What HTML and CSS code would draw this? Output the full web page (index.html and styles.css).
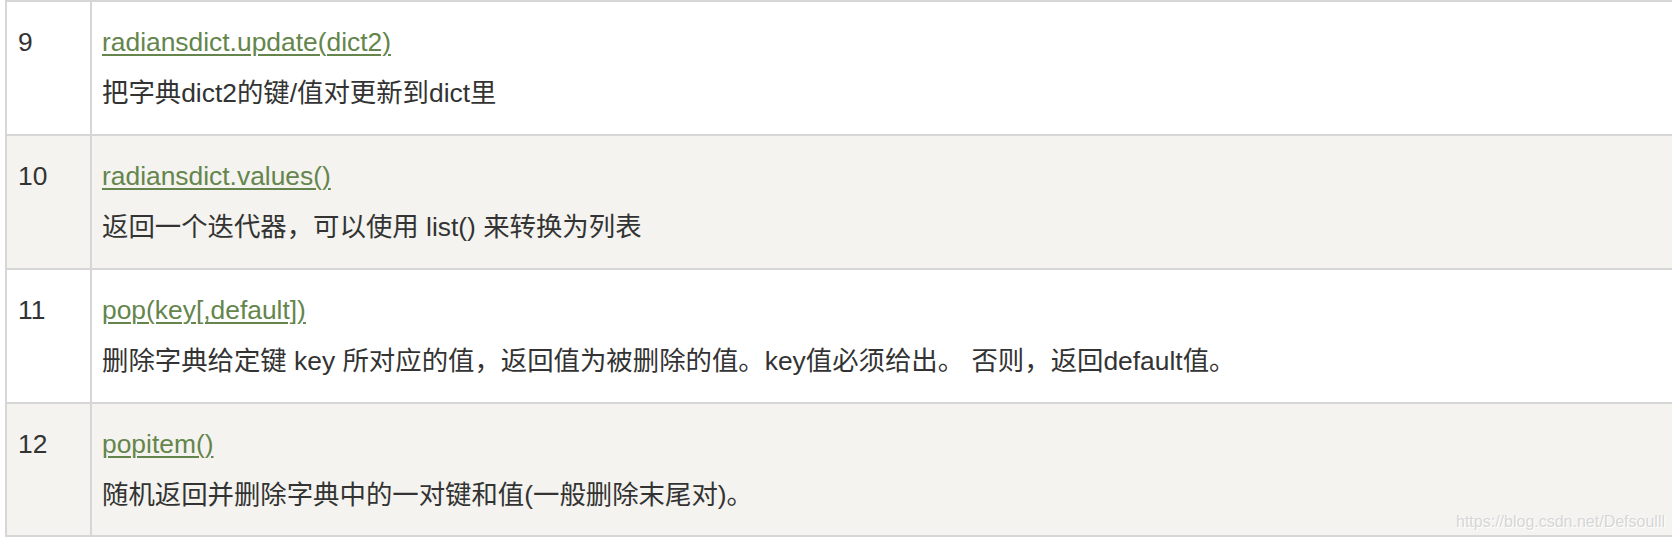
FILE: index.html
```html
<!DOCTYPE html>
<html lang="zh-CN">
<head>
<meta charset="utf-8">
<title>Python 字典方法</title>
<link rel="stylesheet" href="styles.css">
</head>
<body>
<div class="page">
  <table class="ref-table">
    <tbody>
      <tr class="row-odd">
        <td class="num">9</td>
        <td class="desc"><a href="#">radiansdict.update(dict2)</a><br>把字典dict2的键/值对更新到dict里</td>
      </tr>
      <tr class="row-even">
        <td class="num">10</td>
        <td class="desc"><a href="#">radiansdict.values()</a><br>返回一个迭代器，可以使用 list() 来转换为列表</td>
      </tr>
      <tr class="row-odd">
        <td class="num">11</td>
        <td class="desc"><a href="#">pop(key[,default])</a><br>删除字典给定键 key 所对应的值，返回值为被删除的值。key值必须给出。 否则，返回default值。</td>
      </tr>
      <tr class="row-even last">
        <td class="num">12</td>
        <td class="desc"><a href="#">popitem()</a><br>随机返回并删除字典中的一对键和值(一般删除末尾对)。</td>
      </tr>
    </tbody>
  </table>
  <div class="watermark">https://blog.csdn.net/Defsoulll</div>
</div>
</body>
</html>
```
FILE: styles.css
```css
html, body {
  margin: 0;
  padding: 0;
  overflow: hidden;
  background: #ffffff;
}

.page {
  position: relative;
  padding-left: 5px;
  width: 1667px;
  height: 542px;
  font-family: "Liberation Sans", "Noto Sans CJK SC", sans-serif;
  font-size: 26.4px;
  color: #333333;
}

.ref-table {
  border-collapse: separate;
  border-spacing: 0;
  table-layout: fixed;
  width: 1700px;
  border-top: 2px solid #d6d6d6;
  border-left: 2px solid #d6d6d6;
}

.ref-table td {
  vertical-align: top;
  padding: 15px 10px 15px 10px;
  line-height: 51px;
  border-bottom: 2px solid #d6d6d6;
  white-space: nowrap;
}

.ref-table .num {
  box-sizing: border-box;
  width: 85px;
  padding-left: 11px;
  border-right: 2px solid #d6d6d6;
}

.row-odd td {
  background: #ffffff;
}

.row-even td {
  background: #f4f3ef;
}

.last td {
  padding-bottom: 14px;
}

.desc a {
  color: #64854c;
  text-decoration: underline;
  text-decoration-thickness: 2px;
  text-underline-offset: 3px;
}

.watermark {
  position: absolute;
  left: 1456px;
  top: 512px;
  font-family: "Liberation Sans", sans-serif;
  font-size: 16px;
  line-height: 20px;
  color: rgba(210, 210, 210, 0.9);
  text-shadow: 1px 1px 0 #ffffff;
  white-space: nowrap;
}
```
